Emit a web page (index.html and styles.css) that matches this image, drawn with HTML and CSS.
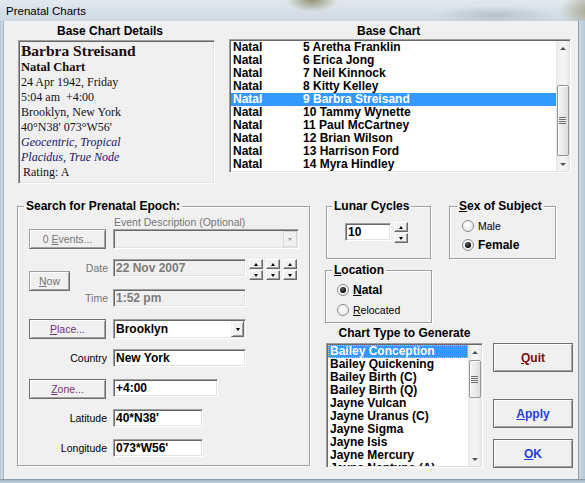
FILE: index.html
```html
<!DOCTYPE html>
<html>
<head>
<meta charset="utf-8">
<title>Prenatal Charts</title>
<link rel="stylesheet" href="styles.css">
</head>
<body>
<div class="window">
  <div class="titlebar"><span class="title">Prenatal Charts</span></div>
  <div class="frame-row">
    <div class="frame-l"></div>
    <div class="client">
      <div class="top">
        <div class="details-col">
          <div class="cap cap-details">Base Chart Details</div>
          <div class="details">
            <div class="d-name">Barbra Streisand</div>
            <div class="d-line d-bold">Natal Chart</div>
            <div class="d-line">24 Apr 1942, Friday</div>
            <div class="d-line">5:04 am&nbsp; +4:00</div>
            <div class="d-line">Brooklyn, New York</div>
            <div class="d-line">40°N38' 073°W56'</div>
            <div class="d-line d-it">Geocentric, Tropical</div>
            <div class="d-line d-it">Placidus, True Node</div>
            <div class="d-line d-rating">Rating: A</div>
          </div>
        </div>
        <div class="base-col">
          <div class="cap cap-base">Base Chart</div>
          <div class="listbox base-list">
            <div class="rows base-rows">
              <div class="row"><span class="c1">Natal</span><span>5 Aretha Franklin</span></div>
              <div class="row"><span class="c1">Natal</span><span>6 Erica Jong</span></div>
              <div class="row"><span class="c1">Natal</span><span>7 Neil Kinnock</span></div>
              <div class="row"><span class="c1">Natal</span><span>8 Kitty Kelley</span></div>
              <div class="row sel"><span class="c1">Natal</span><span>9 Barbra Streisand</span></div>
              <div class="row"><span class="c1">Natal</span><span>10 Tammy Wynette</span></div>
              <div class="row"><span class="c1">Natal</span><span>11 Paul McCartney</span></div>
              <div class="row"><span class="c1">Natal</span><span>12 Brian Wilson</span></div>
              <div class="row"><span class="c1">Natal</span><span>13 Harrison Ford</span></div>
              <div class="row"><span class="c1">Natal</span><span>14 Myra Hindley</span></div>
            </div>
            <div class="vscroll vs-base">
              <div class="sarrow"><i class="stri up"></i></div>
              <div class="thumb"><i class="grip"></i></div>
              <div class="sarrow bottomarrow"><i class="stri down"></i></div>
            </div>
          </div>
        </div>
      </div>

      <div class="bottom">
        <fieldset class="group search">
          <legend>Search for Prenatal Epoch:</legend>
          <div class="search-body">
            <div class="hint dis">Event Description (Optional)</div>
            <div class="btn sbtn g-events dis">0&nbsp;<u>E</u>vents...</div>
            <div class="combo dis g-ecombo w186"><span class="ctext"></span><span class="dd"><i class="tri dtri"></i></span></div>

            <div class="btn sbtn g-now dis"><u>N</u>ow</div>
            <div class="lbl dis g-datel">Date</div>
            <div class="date-row g-date">
              <div class="field dis w133">22 Nov 2007</div>
              <div class="spins">
                <div class="spin"><div class="sb"><i class="tri up"></i></div><div class="sb"><i class="tri"></i></div></div>
                <div class="spin"><div class="sb"><i class="tri up"></i></div><div class="sb"><i class="tri"></i></div></div>
                <div class="spin"><div class="sb"><i class="tri up"></i></div><div class="sb"><i class="tri"></i></div></div>
              </div>
            </div>
            <div class="lbl dis g-timel">Time</div>
            <div class="field dis w133 g-time">1:52 pm</div>

            <div class="btn sbtn link g-place"><u>P</u>lace...</div>
            <div class="combo w133 g-pcombo"><span class="ctext">Brooklyn</span><span class="dd"><i class="tri"></i></span></div>

            <div class="lbl g-countryl">Country</div>
            <div class="field w133 g-country">New York</div>

            <div class="btn sbtn link g-zone"><u>Z</u>one...</div>
            <div class="field w105 g-zonef">+4:00</div>

            <div class="lbl g-latl">Latitude</div>
            <div class="field w90 g-lat">40*N38'</div>

            <div class="lbl g-lonl">Longitude</div>
            <div class="field w90 g-lon">073*W56'</div>
          </div>
        </fieldset>

        <div class="right">
          <div class="row1">
            <fieldset class="group lunar">
              <legend>Lunar Cycles</legend>
              <div class="lunar-body">
                <div class="field w46 lunar-f">10</div>
                <div class="spin"><div class="sb"><i class="tri up"></i></div><div class="sb"><i class="tri"></i></div></div>
              </div>
            </fieldset>
            <fieldset class="group sex">
              <legend><u>S</u>ex of Subject</legend>
              <div class="radios sex-body">
                <div class="ritem"><span class="radio"></span><span class="rlbl">Male</span></div>
                <div class="ritem"><span class="radio on"></span><span class="rlbl b">Female</span></div>
              </div>
            </fieldset>
          </div>
          <fieldset class="group location">
            <legend><u>L</u>ocation</legend>
            <div class="radios loc-body">
              <div class="ritem"><span class="radio on"></span><span class="rlbl b"><u>N</u>atal</span></div>
              <div class="ritem"><span class="radio"></span><span class="rlbl"><u>R</u>elocated</span></div>
            </div>
          </fieldset>
          <div class="chart-area">
            <div class="chart-col">
              <div class="cap cap-chart">Chart Type to Generate</div>
              <div class="listbox chart-list">
                <div class="rows chart-rows">
                  <div class="row sel focus">Bailey Conception</div>
                  <div class="row">Bailey Quickening</div>
                  <div class="row">Bailey Birth (C)</div>
                  <div class="row">Bailey Birth (Q)</div>
                  <div class="row">Jayne Vulcan</div>
                  <div class="row">Jayne Uranus (C)</div>
                  <div class="row">Jayne Sigma</div>
                  <div class="row">Jayne Isis</div>
                  <div class="row">Jayne Mercury</div>
                  <div class="row">Jayne Neptune (A)</div>
                </div>
                <div class="vscroll vs-chart">
                  <div class="sarrow"><i class="stri up"></i></div>
                  <div class="thumb"><i class="grip"></i></div>
                  <div class="sarrow bottomarrow"><i class="stri down"></i></div>
                </div>
              </div>
            </div>
            <div class="buttons">
              <div class="btn big quit"><u>Q</u>uit</div>
              <div class="btn big blue apply"><u>A</u>pply</div>
              <div class="btn big blue ok"><u>O</u>K</div>
            </div>
          </div>
        </div>
      </div>
    </div>
    <div class="frame-r"></div>
  </div>
  <div class="frame-b"></div>
</div>
</body>
</html>
```

FILE: styles.css
```css
* { box-sizing: border-box; }
html, body { margin: 0; padding: 0; }
body {
  width: 585px; height: 483px; overflow: hidden;
  font-family: "Liberation Sans", Arial, sans-serif;
  font-size: 10.5px; color: #000;
  background: #c8d6e2;
}
.window { width: 585px; height: 483px; display: flex; flex-direction: column; }

/* title bar (Vista glass) */
.titlebar {
  height: 21px; padding: 1px 0 0 6px;
  display: flex; align-items: center;
  background:
    radial-gradient(ellipse 26px 12px at 312px 0px, rgba(120,118,70,0.75), rgba(120,118,70,0) 100%),
    radial-gradient(ellipse 60px 9px at 495px 15px, rgba(150,160,170,0.45), rgba(150,160,170,0) 100%),
    radial-gradient(ellipse 30px 20px at 590px 10px, rgba(130,125,80,0.6), rgba(130,125,80,0) 100%),
    linear-gradient(to bottom, #e3e9ee 0%, #d6dfe6 60%, #cdd8e1 100%);
}
.title { font-size: 11.5px; color: #000; letter-spacing: 0; }

.frame-row { display: flex; height: 458px; }
.frame-l { width: 4px; background: linear-gradient(to right, #b9c9d6, #cfdce6); border-right: 1px solid #a8b4bf; }
.frame-r { width: 7px; background: linear-gradient(to right, #cad8e3, #b7c8d6); border-left: 1px solid #8f9ba6; }
.frame-b { height: 4px; background: linear-gradient(to bottom, #9fb6cb, #c3d3e0); border-top: 1px solid #8c9cab; }

.client { width: 574px; height: 458px; background: #f0f0f0; }

/* ---------- top section ---------- */
.top { display: flex; align-items: flex-start; padding-top: 3px; }
.cap { font-weight: bold; font-size: 12px; line-height: 14px; white-space: nowrap; }
.details-col { margin-left: 14px; width: 197px; }
.cap-details { height: 16px; padding-left: 39px; }
.details {
  height: 144px;
  border: 1px solid; border-color: #a0a0a0 #fff #fff #a0a0a0;
  box-shadow: inset 1px 1px 0 #696969, inset -1px -1px 0 #e3e3e3;
  padding: 1px 0 0 2px;
  font-family: "Liberation Serif", "Times New Roman", serif;
  color: #14101a;
}
.d-name { font-weight: bold; font-size: 15.5px; line-height: 18px; color: #1e0a0a; }
.d-line { font-size: 12px; line-height: 15px; white-space: nowrap; }
.d-bold { font-weight: bold; font-size: 12.5px; color: #1e0a0a; }
.d-it { font-style: italic; color: #16166a; }
.d-rating { padding-left: 2px; }

.base-col { margin-left: 14px; width: 342px; }
.cap-base { height: 15px; padding-left: 128px; }

.listbox {
  display: flex; background: #fff; overflow: hidden;
  border: 1px solid; border-color: #a0a0a0 #fff #fff #a0a0a0;
  box-shadow: inset 1px 1px 0 #696969, inset -1px -1px 0 #e3e3e3;
  padding: 1px;
}
.base-list { height: 134px; }
.rows { flex: 1; overflow: hidden; font-weight: bold; font-size: 12px; }
.row { height: 13px; line-height: 13px; white-space: nowrap; padding-left: 2px; display: flex; }
.row.sel { background: #3399ff; color: #fff; }
.row.focus { outline: 1px dotted #e9c77d; outline-offset: -1px; }
.c1 { width: 70px; flex: none; }

/* vista scrollbars */
.vscroll {
  width: 13px; flex: none; display: flex; flex-direction: column; align-items: center;
  background: linear-gradient(to right, #e6e6e6, #f4f4f4 35%, #f4f4f4 70%, #e8e8e8);
}
.sarrow { height: 14px; width: 100%; display: flex; align-items: center; justify-content: center; flex: none; }
.bottomarrow { margin-top: auto; }
.stri { display: block; width: 0; height: 0; border-left: 3px solid transparent; border-right: 3px solid transparent; }
.stri.up { border-bottom: 3px solid #505050; }
.stri.down { border-top: 3px solid #505050; }
.thumb {
  width: 12px; flex: none;
  border: 1px solid #959595; border-radius: 2px;
  background: linear-gradient(to right, #f5f5f5, #e9e9e9 50%, #dcdcdc);
  box-shadow: inset 1px 1px 0 #fff;
  display: flex; align-items: center; justify-content: center;
}
.grip {
  display: block; width: 7px; height: 7px;
  background: repeating-linear-gradient(to bottom, #6b6b6b 0, #6b6b6b 1px, #f2f2f2 1px, #f2f2f2 2px);
}
.vs-base .thumb { margin-top: 30px; height: 71px; }
.vs-chart .thumb { margin-top: 1px; height: 38px; }

/* ---------- bottom section ---------- */
.bottom { display: flex; align-items: flex-start; margin-top: 15px; }

.group {
  margin: 0; padding: 0; min-width: 0;
  border: 1px solid #a0a0a0;
  box-shadow: inset 1px 1px 0 #fff, 1px 1px 0 #fff;
}
.group > legend {
  font-weight: bold; font-size: 12px; line-height: 14px;
  padding: 0 2px; background: #f0f0f0; white-space: nowrap;
}

.search { margin-left: 13px; width: 293px; }
.search > legend { margin-left: 6px; }
.search-body {
  display: grid;
  grid-template-columns: 41px 36px 7px 186px;
  grid-template-rows: 14px 20px 10px 18px 12px 18px 12px 20px 10px 18px 12px 20px 10px 18px 12px 18px;
  padding: 2px 10px 8px 11px;
}
.dis { color: #767676; }
.hint { grid-column: 4; grid-row: 1; padding-left: 1px; line-height: 14px; white-space: nowrap; }
.lbl { line-height: 18px; text-align: right; white-space: nowrap; }

.btn {
  display: flex; align-items: center; justify-content: center;
  background: #f0f0f0;
  border: 1px solid #6e6e6e;
  box-shadow: inset 1px 1px 0 #fff, inset -1px -1px 0 #a0a0a0;
  white-space: nowrap;
}
.sbtn { height: 20px; font-size: 10.5px; }
.btn.dis { border-color: #a0a0a0 #6e6e6e #6e6e6e #a0a0a0; }
.link { color: #72307a; }
.g-events { grid-column: 1 / 3; grid-row: 2; }
.g-ecombo { grid-column: 4; grid-row: 2; }
.g-now { grid-column: 1; grid-row: 4 / 7; align-self: start; margin-top: 12px; }
.g-datel { grid-column: 2 / 4; grid-row: 4; padding-right: 5px; }
.g-date { grid-column: 4; grid-row: 4; }
.g-timel { grid-column: 2 / 4; grid-row: 6; padding-right: 5px; }
.g-time { grid-column: 4; grid-row: 6; }
.g-place { grid-column: 1 / 3; grid-row: 8; }
.g-pcombo { grid-column: 4; grid-row: 8; }
.g-countryl { grid-column: 1 / 4; grid-row: 10; padding-right: 6px; }
.g-country { grid-column: 4; grid-row: 10; }
.g-zone { grid-column: 1 / 3; grid-row: 12; }
.g-zonef { grid-column: 4; grid-row: 12; }
.g-latl { grid-column: 1 / 4; grid-row: 14; padding-right: 6px; }
.g-lat { grid-column: 4; grid-row: 14; }
.g-lonl { grid-column: 1 / 4; grid-row: 16; padding-right: 6px; }
.g-lon { grid-column: 4; grid-row: 16; }

.field, .combo {
  border: 1px solid; border-color: #a0a0a0 #fff #fff #a0a0a0;
  box-shadow: inset 1px 1px 0 #696969, inset -1px -1px 0 #e3e3e3;
  background: #fff; font-weight: bold; font-size: 12px; white-space: nowrap; overflow: hidden;
}
.field { height: 18px; line-height: 16px; padding: 0 0 0 2px; }
.field.dis { background: #f0f0f0; color: #7b7b7b; }
.combo { height: 20px; line-height: 18px; padding: 0 1px 0 2px; display: flex; }
.combo.dis { background: #f0f0f0; }
.ctext { flex: 1; }
.dd {
  width: 13px; height: 16px; margin-top: 1px; flex: none;
  display: flex; align-items: center; justify-content: center;
  background: #f0f0f0;
  border: 1px solid; border-color: #f0f0f0 #696969 #696969 #f0f0f0;
  box-shadow: inset 1px 1px 0 #fff, inset -1px -1px 0 #a0a0a0;
}
.combo.dis .dd { border: 1px solid #d8d8d8; box-shadow: none; width: 14px; }
.w186 { width: 186px; }
.w133 { width: 133px; }
.w105 { width: 105px; }
.w90 { width: 90px; }
.w46 { width: 46px; }

.tri { display: block; width: 0; height: 0; border-left: 2.5px solid transparent; border-right: 2.5px solid transparent; border-top: 3px solid #000; }
.tri.up { border-top: 0; border-bottom: 3px solid #000; }
.dtri { border-top-color: #a0a0a0; }

.date-row { display: flex; align-items: flex-start; }
.spins { display: flex; gap: 3px; margin-left: 3px; }
.spin { display: flex; flex-direction: column; gap: 1px; width: 14px; flex: none; }
.sb {
  height: 10px; display: flex; align-items: center; justify-content: center;
  background: #f0f0f0;
  border: 1px solid; border-color: #fff #696969 #696969 #fff;
  box-shadow: inset -1px -1px 0 #a0a0a0;
}

.right { margin-left: 15px; display: flex; flex-direction: column; align-items: flex-start; }
.row1 { display: flex; align-items: stretch; }
.lunar { margin-left: 1px; width: 105px; }
.lunar > legend { margin-left: 5px; }
.lunar-body { display: flex; align-items: flex-start; padding: 9px 0 0 18px; }
.lunar-f { margin-top: 1px; }
.lunar-body .spin { margin-left: 3px; }

.sex { margin-left: 18px; width: 107px; }
.sex > legend { margin-left: 7px; }
.radios { display: flex; flex-direction: column; }
.sex-body { padding: 5px 0 5px 12px; gap: 3px; }
.location { margin-top: 4px; width: 107px; }
.location > legend { margin-left: 6px; }
.loc-body { padding: 5px 0 4px 11px; gap: 4px; }
.ritem { height: 16px; display: flex; align-items: center; white-space: nowrap; }
.radio {
  width: 12px; height: 12px; border-radius: 50%; flex: none;
  border: 1px solid #8c8c8c;
  background: radial-gradient(circle at 40% 35%, #ffffff, #e2e2e2);
  display: flex; align-items: center; justify-content: center;
}
.radio.on::after {
  content: ""; width: 6px; height: 6px; border-radius: 50%;
  background: radial-gradient(circle at 40% 35%, #666, #000 70%);
}
.rlbl { margin-left: 4px; font-size: 10.5px; }
.rlbl.b { font-weight: bold; font-size: 12px; }

.chart-area { display: flex; align-items: flex-start; margin-top: 3px; }
.chart-col { margin-left: 1px; width: 157px; }
.cap-chart { height: 17px; text-align: center; line-height: 14px; }
.chart-list { height: 125px; }
.chart-rows .row { display: block; }

.buttons { margin-left: 10px; width: 80px; padding-top: 17px; display: flex; flex-direction: column; }
.big { height: 29px; font-weight: bold; font-size: 12px; }
.quit { color: #7a0a0a; }
.blue { color: #1f3fe0; }
.apply { margin-top: 27px; }
.ok { margin-top: 11px; }
```
